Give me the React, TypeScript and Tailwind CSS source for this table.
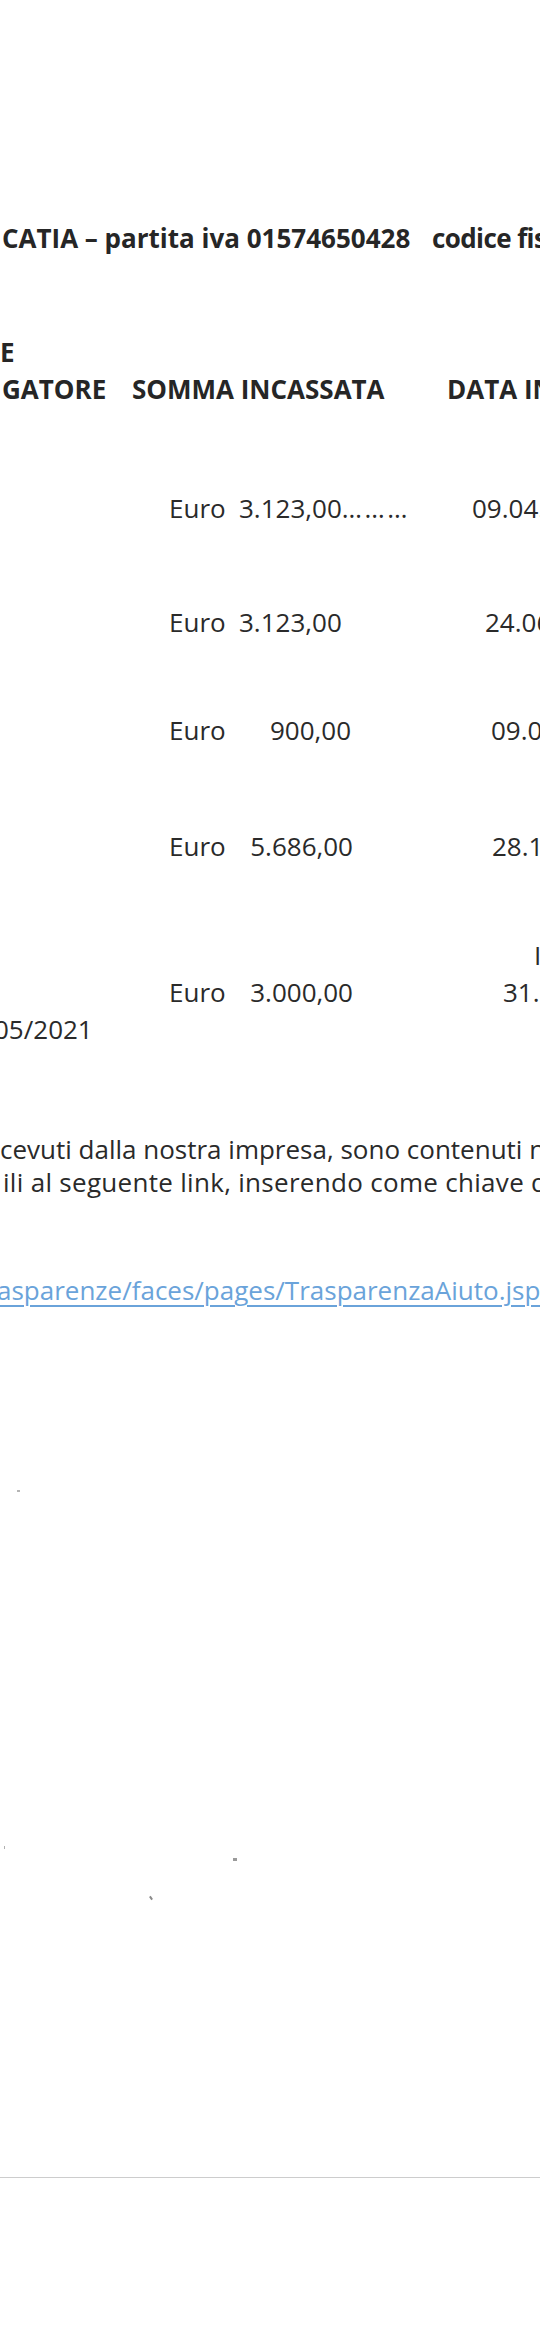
import React from "react";

type Row = {
  mt: string;
  amount: string;
  dots?: boolean;
  amountClass: string;
  dateMl: string;
  date: string;
};

const rows: Row[] = [
  { mt: "mt-[82px]", amount: "3.123,00", dots: true, amountClass: "text-left", dateMl: "ml-[119px]", date: "09.04.2020" },
  { mt: "mt-[78px]", amount: "3.123,00", amountClass: "text-left", dateMl: "ml-[132px]", date: "24.06.2020" },
  { mt: "mt-[72px]", amount: "900,00", amountClass: "text-right pr-[2px]", dateMl: "ml-[138px]", date: "09.07.2020" },
  { mt: "mt-[80px]", amount: "5.686,00", amountClass: "text-right", dateMl: "ml-[139px]", date: "28.10.2020" },
];

export default function App() {
  return (
    <div className="relative w-[540px] h-[2338px] overflow-hidden bg-white text-[#2a2a2a] font-['Open_Sans',sans-serif] text-[26px] pt-[220px]">
      {/* Company line */}
      <div className="flex h-[36px] leading-[36px] whitespace-nowrap font-bold text-[#262626]">
        <span className="w-[432px] shrink-0 pl-[2px]">CATIA – partita iva 01574650428</span>
        <span className="shrink-0 tracking-[-0.6px]">codice fiscale</span>
      </div>

      {/* Table header */}
      <div className="mt-[78px] flex font-bold whitespace-nowrap leading-[37px] text-[#262626]">
        <div className="w-[132px] shrink-0 flex flex-col">
          <span>E</span>
          <span className="pl-[2px]">GATORE</span>
        </div>
        <div className="w-[315px] shrink-0 flex flex-col justify-end">
          <span>SOMMA INCASSATA</span>
        </div>
        <div className="shrink-0 flex flex-col justify-end">
          <span>DATA INCASSO</span>
        </div>
      </div>

      {/* Rows */}
      {rows.map((r, i) => (
        <div key={i} className={`${r.mt} flex h-[36px] leading-[36px] whitespace-nowrap`}>
          <span className="w-[169px] shrink-0" />
          <span className="w-[70px] shrink-0">Euro</span>
          <span className={`w-[114px] shrink-0 ${r.amountClass}`}>
            {r.amount}
            {r.dots ? <span className="tracking-[2.5px]">………</span> : null}
          </span>
          <span className={`${r.dateMl} shrink-0`}>{r.date}</span>
        </div>
      ))}

      {/* Last row, three lines */}
      <div className="mt-[73px] flex flex-col leading-[37px] whitespace-nowrap">
        <div className="flex h-[37px]">
          <span className="w-[534px] shrink-0" />
          <span className="shrink-0">I</span>
        </div>
        <div className="flex h-[37px]">
          <span className="w-[169px] shrink-0" />
          <span className="w-[70px] shrink-0">Euro</span>
          <span className="w-[114px] shrink-0 text-right">3.000,00</span>
          <span className="ml-[150px] shrink-0">31.12.2020</span>
        </div>
        <div className="flex h-[37px]">
          <span className="ml-[-6px] shrink-0">05/2021</span>
        </div>
      </div>

      {/* Paragraph */}
      <div className="mt-[85px] flex flex-col leading-[33px] whitespace-nowrap">
        <span className="h-[33px]">cevuti dalla nostra impresa, sono contenuti nel</span>
        <span className="h-[33px] pl-[3px] tracking-[0.3px]">ili al seguente link, inserendo come chiave di</span>
      </div>

      {/* Link */}
      <div className="mt-[73px] h-[36px] leading-[36px] whitespace-nowrap ml-[-3px]">
        <span className="text-[#6aa3da] underline decoration-[1.5px] underline-offset-[5px]">
          asparenze/faces/pages/TrasparenzaAiuto.jsp
        </span>
      </div>

      {/* Bottom rule */}
      <div className="mt-[869px] h-px w-full bg-[#cdcdcd]" />

      {/* scan specks */}
      <div className="absolute left-[150px] top-[1896px] h-[4px] w-[2px] rotate-[-35deg] bg-[#8a8a8a]" />
      <div className="absolute left-[233px] top-[1858px] h-[3px] w-[4px] bg-[#9a9a9a]" />
      <div className="absolute left-[4px] top-[1846px] h-[3px] w-[1px] bg-[#b0b0b0]" />
      <div className="absolute left-[17px] top-[1490px] h-[2px] w-[3px] bg-[#b5b5b5]" />
    </div>
  );
}
